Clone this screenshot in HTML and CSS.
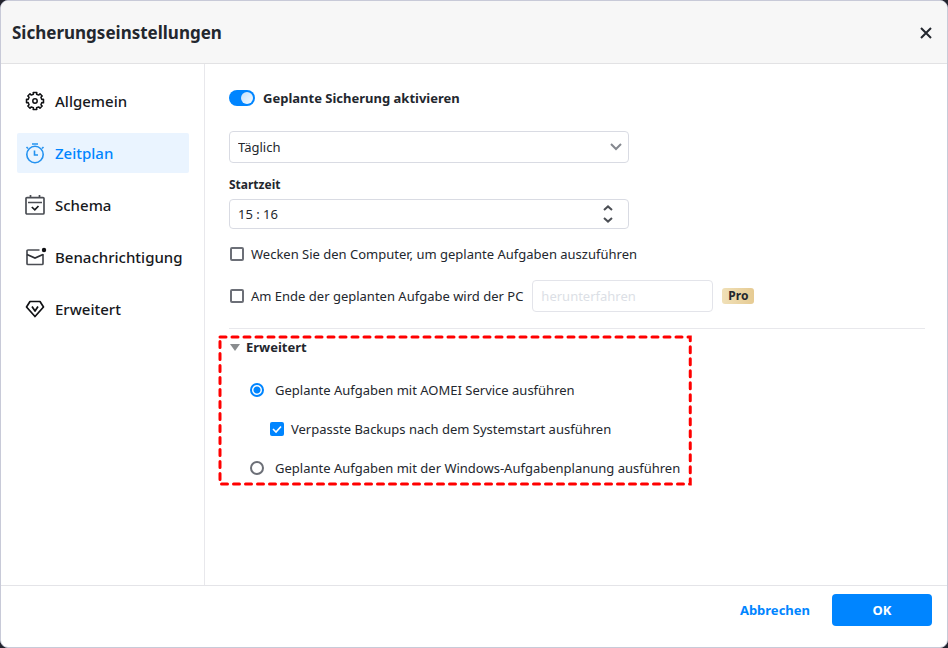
FILE: index.html
```html
<!DOCTYPE html>
<html lang="de">
<head>
  <meta charset="UTF-8">
  <meta name="viewport" content="width=device-width, initial-scale=1">
  <title>Sicherungseinstellungen</title>
  <link rel="stylesheet" href="styles.css">
</head>
<body>
  <div class="dialog">
    <header class="dialog-header">
      <h1>Sicherungseinstellungen</h1>
      <button type="button" class="close" aria-label="Schließen">
        <svg width="12" height="12" viewBox="0 0 12 12"><path d="M1 1l10 10M11 1L1 11" stroke="#23272e" stroke-width="2"/></svg>
      </button>
    </header>

    <div class="dialog-body">
      <nav class="sidebar">
        <a href="#allgemein">
          <svg width="20" height="20" viewBox="0 0 20 20" fill="none" stroke="#101114" stroke-width="1.5" stroke-linejoin="round">
            <path d="M16.8 11.6L18.5 11.8V8.2L16.8 8.4L15.9 6.3L17.2 5L15 2.8L13.7 4.100L11.600 3.200L11.800 1.500H8.200L8.400 3.200L6.300 4.100L5 2.800L2.800 5L4.100 6.300L3.200 8.400L1.500 8.200V11.800L3.200 11.600L4.100 13.700L2.800 15L5 17.200L6.300 15.900L8.400 16.800L8.200 18.500H11.800L11.600 16.800L13.700 15.900L15 17.200L17.200 15L15.900 13.700z"/>
            <circle cx="10" cy="10" r="2.2"/>
          </svg>
          Allgemein
        </a>
        <a href="#zeitplan" class="active">
          <svg width="20" height="20" viewBox="0 0 20 20" fill="none" stroke="#2492f0" stroke-width="1.6">
            <circle cx="10" cy="11.5" r="8.2"/>
            <path d="M7 1h6M9.500 7.500V12h3.500M1.500 4l1.500 1.500M18.500 4L17 5.500"/>
          </svg>
          Zeitplan
        </a>
        <a href="#schema">
          <svg width="20" height="20" viewBox="0 0 20 20" fill="none" stroke="#4b4e54" stroke-width="1.7">
            <rect x="1" y="2.6" width="18" height="16.4" rx="1"/>
            <path d="M5.500 0v3M14.500 0v3M3 7.500h14"/>
            <path d="M6.800 12l3 2.800L13.500 11" stroke="#17191d"/>
          </svg>
          Schema
        </a>
        <a href="#benachrichtigung">
          <svg width="20" height="20" viewBox="0 0 20 20" fill="none" stroke="#4b4e54" stroke-width="1.7">
            <path d="M14.500 3H3a1 1 0 0 0-1 1v12.500a1 1 0 0 0 1 1h14a1 1 0 0 0 1-1V7"/>
            <path d="M2 7.500l8 3.500 8-3.500" stroke="#2c2e33"/>
            <circle cx="19" cy="3" r="2.2" fill="#101114" stroke="none"/>
          </svg>
          Benachrichtigung
        </a>
        <a href="#erweitert">
          <svg width="20" height="20" viewBox="0 0 20 20" fill="none" stroke="#101114" stroke-width="1.7" stroke-linejoin="round">
            <path d="M5 2.500h10L18.500 8 10 17.500 1.500 8z"/>
            <path d="M7 7.500l3 4.500 3-4.500"/>
          </svg>
          Erweitert
        </a>
      </nav>

      <main class="content">
        <label class="switch-row">
          <input type="checkbox" class="switch" checked>
          Geplante Sicherung aktivieren
        </label>

        <select class="interval" aria-label="Intervall">
          <option>Täglich</option>
          <option>Wöchentlich</option>
          <option>Monatlich</option>
        </select>

        <label class="field-label" for="startzeit">Startzeit</label>
        <div class="time-field">
          <input type="text" id="startzeit" value="15 : 16">
          <div class="stepper">
            <button type="button" aria-label="Später">
              <svg width="10" height="6" viewBox="0 0 10 6"><path d="M1 5l4-3.600L9 5"/></svg>
            </button>
            <button type="button" aria-label="Früher">
              <svg width="10" height="6" viewBox="0 0 10 6"><path d="M1 1l4 3.600L9 1"/></svg>
            </button>
          </div>
        </div>

        <div class="option">
          <label class="choice"><input type="checkbox">Wecken Sie den Computer, um geplante Aufgaben auszuführen</label>
        </div>
        <div class="option shutdown">
          <label class="choice"><input type="checkbox">Am Ende der geplanten Aufgabe wird der PC</label>
          <input type="text" class="action" value="herunterfahren" aria-label="Aktion" disabled>
          <span class="pro">Pro</span>
        </div>

        <hr>

        <section class="advanced">
          <svg class="marker"><rect width="100%" height="100%"/></svg>
          <h2>
            <svg width="10" height="7" viewBox="0 0 10 7"><path d="M0 0h10L5 7z" fill="#8a8d8f"/></svg>
            Erweitert
          </h2>
          <label class="choice wide"><input type="radio" name="dienst" checked>Geplante Aufgaben mit AOMEI Service ausführen</label>
          <label class="choice nested"><input type="checkbox" checked>Verpasste Backups nach dem Systemstart ausführen</label>
          <label class="choice wide"><input type="radio" name="dienst">Geplante Aufgaben mit der Windows-Aufgabenplanung ausführen</label>
        </section>
      </main>
    </div>

    <footer class="dialog-footer">
      <button type="button" class="cancel">Abbrechen</button>
      <button type="button" class="ok">OK</button>
    </footer>
  </div>
</body>
</html>
```
FILE: styles.css
```css
* {
  box-sizing: border-box;
}

body {
  margin: 0;
  background: #23242e;
  color: #23272e;
  font-family: "Noto Sans", "Open Sans", sans-serif;
  font-size: 13px;
  line-height: 20px;
}

input, select, button {
  font: inherit;
  color: inherit;
  margin: 0;
}

button {
  padding: 0;
  border: none;
  background: none;
  cursor: pointer;
}

.dialog {
  display: flex;
  flex-direction: column;
  min-height: 100vh;
  background: #fff;
  border: 1px solid #c8cad8;
  border-radius: 8px;
  overflow: hidden;
}

.dialog-header {
  display: flex;
  justify-content: space-between;
  align-items: center;
  height: 63px;
  padding: 1px 15px 0 11px;
  background: #f7f7f7;
  border-bottom: 1px solid #e2e2e4;
}

h1 {
  margin: 0;
  font-size: 17px;
  line-height: 24px;
}

.close {
  display: flex;
}

.dialog-body {
  display: flex;
  flex: 1;
}

/* navigation */
.sidebar {
  display: flex;
  flex-direction: column;
  gap: 12px;
  width: 204px;
  padding: 17px 15px 17px 16px;
  border-right: 1px solid #e8e8ec;
}

.sidebar a {
  display: flex;
  align-items: center;
  gap: 10px;
  height: 40px;
  padding: 0 8px;
  border-radius: 2px;
  color: #17191d;
  font-size: 15px;
  font-weight: 500;
  text-decoration: none;
}

.sidebar svg {
  flex: none;
  overflow: visible;
}

.sidebar .active {
  background: #eaf4ff;
  color: #0085ff;
}

/* content */
.content {
  flex: 1;
  padding: 24px 22px 24px 24px;
}

.switch-row {
  display: flex;
  align-items: center;
  gap: 8px;
  font-weight: bold;
}

.switch {
  appearance: none;
  width: 26px;
  height: 16px;
  padding: 2px;
  border-radius: 8px;
  background: #0085ff;
}

.switch::before {
  content: "";
  display: block;
  width: 12px;
  height: 12px;
  margin-left: 10px;
  border-radius: 50%;
  background: linear-gradient(135deg, #c4e1fb, #f4faff);
}

.interval, .time-field {
  width: 400px;
  max-width: 100%;
  padding: 0 8px;
  border: 1px solid #d9dbe3;
  border-radius: 4px;
  background: #fff;
}

.interval {
  appearance: none;
  display: block;
  height: 32px;
  margin: 23px 0 12px;
  background: url("data:image/svg+xml,%3Csvg xmlns='http://www.w3.org/2000/svg' width='12' height='8' fill='none' stroke='%2385888f' stroke-width='2'%3E%3Cpath d='M1 1l5 5 5-5'/%3E%3C/svg%3E") no-repeat right 6px center;
}

.field-label {
  display: block;
  margin-bottom: 4px;
  font-size: 12px;
  font-weight: bold;
}

.time-field {
  display: flex;
  align-items: center;
  height: 30px;
}

.time-field input {
  flex: 1;
  min-width: 0;
  padding: 0;
  border: none;
  outline: none;
}

.stepper {
  display: flex;
  flex-direction: column;
  gap: 6px;
  margin-right: 7px;
}

.stepper button {
  display: flex;
}

.stepper path {
  fill: none;
  stroke: #4c4f55;
  stroke-width: 2;
}

.option {
  display: flex;
  align-items: center;
  margin-top: 15px;
}

.shutdown {
  gap: 9px;
  margin-top: 16px;
}

.choice {
  display: flex;
  align-items: center;
  gap: 7px;
}

.choice input {
  appearance: none;
  flex: none;
  width: 14px;
  height: 14px;
  border: 2px solid #6c6f77;
  border-radius: 2px;
  background: #fff;
}

.choice input[type="checkbox"]:checked {
  border: none;
  background: #0085ff url("data:image/svg+xml,%3Csvg xmlns='http://www.w3.org/2000/svg' width='14' height='14' fill='none' stroke='white' stroke-width='1.6'%3E%3Cpath d='M3 7l3 3 5-5.5'/%3E%3C/svg%3E");
}

.choice input[type="radio"] {
  border-radius: 50%;
}

.choice input[type="radio"]:checked {
  border-color: #0085ff;
  background: radial-gradient(circle, #0085ff 3px, #fff 4px);
}

.option .choice input {
  margin-left: 1px;
}

.action {
  width: 181px;
  height: 32px;
  padding: 0 8px;
  border: 1px solid #e3e4ea;
  border-radius: 4px;
  background: #fff;
  color: #dcdfe6;
}

.pro {
  padding: 0 6px;
  border-radius: 3px;
  background: linear-gradient(90deg, #f0e0b8, #e6cb93);
  font-size: 12px;
  font-weight: bold;
  line-height: 16px;
}

hr {
  margin: 16px 0 8px;
  border: none;
  border-top: 1px solid #e8e8ec;
}

/* advanced options */
.advanced {
  position: relative;
  display: flex;
  flex-direction: column;
  gap: 19px;
  width: fit-content;
  margin-left: -9px;
  padding: 0 10px 6px;
}

.marker {
  position: absolute;
  inset: 0;
  width: 100%;
  height: 100%;
  overflow: visible;
  pointer-events: none;
}

.marker rect {
  fill: none;
  stroke: #f00;
  stroke-width: 3px;
  stroke-linecap: round;
  stroke-dasharray: 6 6;
}

h2 {
  display: flex;
  align-items: center;
  gap: 6px;
  margin: 0 0 4px;
  font-size: 13px;
  line-height: 20px;
}

.wide {
  gap: 11px;
  margin-left: 20px;
}

.nested {
  margin-left: 40px;
}

/* footer */
.dialog-footer {
  display: flex;
  justify-content: flex-end;
  gap: 22px;
  padding: 8px 15px 21px;
  border-top: 1px solid #e4e4e8;
}

.dialog-footer button {
  height: 32px;
  font-weight: bold;
}

.cancel {
  color: #0085ff;
}

.dialog-footer .ok {
  width: 100px;
  border-radius: 4px;
  background: #0085ff;
  color: #fff;
}
```
